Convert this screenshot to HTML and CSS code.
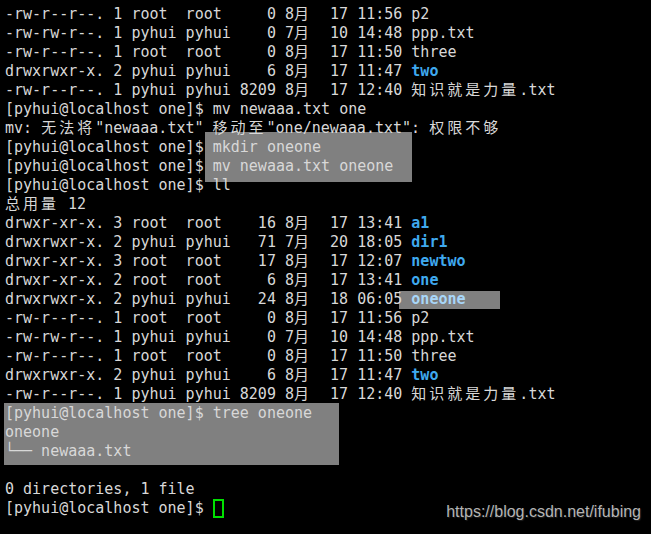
FILE: index.html
```html
<!DOCTYPE html>
<html>
<head>
<meta charset="utf-8">
<link rel="stylesheet" href="styles.css">
</head>
<body>
<div class="term">
  <div class="hl hl-cmd"></div>
  <div class="hl hl-one"></div>
  <div class="hl hl-tree"></div>
  <div class="lines">
<div class="ln">-rw-r--r--. 1 root  root     0 8<span class="c">月</span>  17 11:56 p2</div>
<div class="ln">-rw-rw-r--. 1 pyhui pyhui    0 7<span class="c">月</span>  10 14:48 ppp.txt</div>
<div class="ln">-rw-r--r--. 1 root  root     0 8<span class="c">月</span>  17 11:50 three</div>
<div class="ln">drwxrwxr-x. 2 pyhui pyhui    6 8<span class="c">月</span>  17 11:47 <b class="dir">two</b></div>
<div class="ln">-rw-r--r--. 1 pyhui pyhui 8209 8<span class="c">月</span>  17 12:40 <span class="c">知识就是力量</span>.txt</div>
<div class="ln">[pyhui@localhost one]$ mv newaaa.txt one</div>
<div class="ln">mv: <span class="c">无法将</span>"newaaa.txt" <span class="c">移动至</span>"one/newaaa.txt": <span class="c">权限不够</span></div>
<div class="ln">[pyhui@localhost one]$ mkdir oneone</div>
<div class="ln">[pyhui@localhost one]$ mv newaaa.txt oneone</div>
<div class="ln">[pyhui@localhost one]$ ll</div>
<div class="ln"><span class="c">总用量</span> 12</div>
<div class="ln">drwxr-xr-x. 3 root  root    16 8<span class="c">月</span>  17 13:41 <b class="dir">a1</b></div>
<div class="ln">drwxrwxr-x. 2 pyhui pyhui   71 7<span class="c">月</span>  20 18:05 <b class="dir">dir1</b></div>
<div class="ln">drwxr-xr-x. 3 root  root    17 8<span class="c">月</span>  17 12:07 <b class="dir">newtwo</b></div>
<div class="ln">drwxr-xr-x. 2 root  root     6 8<span class="c">月</span>  17 13:41 <b class="dir">one</b></div>
<div class="ln">drwxrwxr-x. 2 pyhui pyhui   24 8<span class="c">月</span>  18 06:05 <b class="dir dir-hl">oneone</b></div>
<div class="ln">-rw-r--r--. 1 root  root     0 8<span class="c">月</span>  17 11:56 p2</div>
<div class="ln">-rw-rw-r--. 1 pyhui pyhui    0 7<span class="c">月</span>  10 14:48 ppp.txt</div>
<div class="ln">-rw-r--r--. 1 root  root     0 8<span class="c">月</span>  17 11:50 three</div>
<div class="ln">drwxrwxr-x. 2 pyhui pyhui    6 8<span class="c">月</span>  17 11:47 <b class="dir">two</b></div>
<div class="ln">-rw-r--r--. 1 pyhui pyhui 8209 8<span class="c">月</span>  17 12:40 <span class="c">知识就是力量</span>.txt</div>
<div class="ln">[pyhui@localhost one]$ tree oneone</div>
<div class="ln">oneone</div>
<div class="ln">└── newaaa.txt</div>
<div class="ln"> </div>
<div class="ln">0 directories, 1 file</div>
<div class="ln">[pyhui@localhost one]$ <span class="cursor"></span></div>
  </div>
  <div class="mark">https://blog.csdn.net/ifubing</div>
</div>
</body>
</html>
```

FILE: styles.css
```css
html, body {
  margin: 0;
  padding: 0;
  background: #000;
}
.term {
  position: relative;
  width: 651px;
  height: 534px;
  overflow: hidden;
  background: #000;
}
.lines {
  position: relative;
  z-index: 1;
  padding: 5px 0 0 5px;
  font-family: "DejaVu Sans Mono", monospace;
  font-size: 15px;
  color: #d8d8d8;
}
.ln {
  height: 19px;
  line-height: 19px;
  white-space: pre;
}
.c {
  font-family: "Noto Sans CJK SC", sans-serif;
  letter-spacing: 3px;
  line-height: 15px;
  display: inline-block;
  vertical-align: baseline;
}
.dir {
  color: #3fa9ef;
  font-weight: bold;
}
.dir-hl {
  color: #a8d6f8;
}
.hl {
  position: absolute;
  z-index: 0;
  background: #808080;
}
.hl-cmd {
  left: 205px;
  top: 132px;
  width: 207px;
  height: 50px;
}
.hl-one {
  left: 399px;
  top: 291px;
  width: 101px;
  height: 18px;
}
.hl-tree {
  left: 4px;
  top: 403px;
  width: 335px;
  height: 62px;
}
.cursor {
  display: inline-block;
  width: 7px;
  height: 15px;
  border: 2px solid #00e000;
  vertical-align: -5px;
  box-sizing: content-box;
}
.mark {
  position: absolute;
  z-index: 2;
  right: 10px;
  top: 503px;
  font-family: "Liberation Sans", Arial, sans-serif;
  font-size: 16px;
  color: #b4b4b4;
  text-shadow: 1px 1px 1px #222;
}
```
